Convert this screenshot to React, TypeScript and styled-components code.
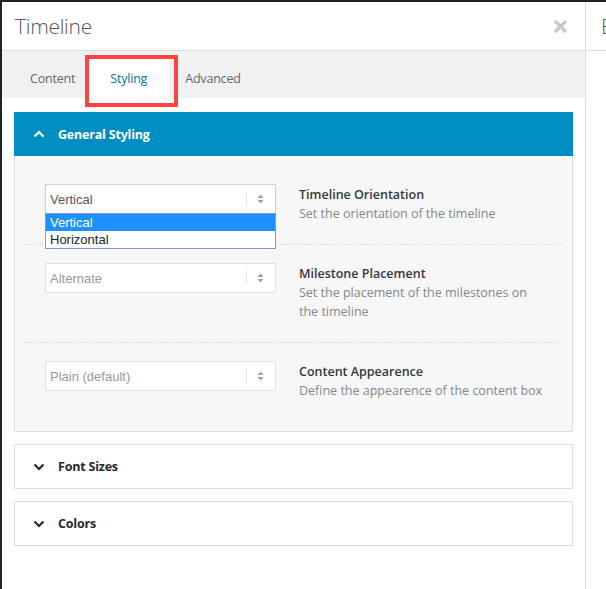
import React from "react"
import styled, { createGlobalStyle } from "styled-components"

const GlobalStyle = createGlobalStyle`
  html, body {
    margin: 0;
    padding: 0;
    background: #1d2226;
    font-family: "Open Sans", "Noto Sans", sans-serif;
  }
`

interface Field {
  value: string
  title: string
  description: string
  active?: boolean
  options?: string[]
}

const fields: Field[] = [
  {
    value: "Vertical",
    title: "Timeline Orientation",
    description: "Set the orientation of the timeline",
    active: true,
    options: ["Vertical", "Horizontal"],
  },
  {
    value: "Alternate",
    title: "Milestone Placement",
    description: "Set the placement of the milestones on the timeline",
  },
  {
    value: "Plain (default)",
    title: "Content Appearence",
    description: "Define the appearence of the content box",
  },
]

const Chevron = ({ up }: { up?: boolean }) => (
  <svg width="12" height="8" viewBox="0 0 12 8">
    <path d={up ? "M1.5 6.5 L6 2 L10.5 6.5" : "M1.5 1.5 L6 6 L10.5 1.5"} fill="none" stroke="currentColor" strokeWidth="2.2" />
  </svg>
)

const CloseIcon = () => (
  <svg width="13" height="13" viewBox="0 0 13 13">
    <path d="M2 2 L11 11 M11 2 L2 11" stroke="#c8c8c8" strokeWidth="3.4" strokeLinecap="round" />
  </svg>
)

const SortArrows = () => (
  <svg width="7" height="10" viewBox="0 0 7 10">
    <path d="M3.5 0.5 L6.5 4 H0.5 Z M3.5 9.5 L6.5 6 H0.5 Z" fill="#a0a0a0" />
  </svg>
)

export default function App() {
  return (
    <>
      <GlobalStyle />
      <S.Screen>
        <S.Modal>
          <S.Header>
            <S.Title>Timeline</S.Title>
            <S.Close>
              <CloseIcon />
            </S.Close>
          </S.Header>
          <S.Tabs>
            <S.Tab>Content</S.Tab>
            <S.Tab active>
              Styling
              <S.Highlight />
            </S.Tab>
            <S.Tab>Advanced</S.Tab>
          </S.Tabs>
          <S.Sections>
            <S.Section>
              <S.SectionHeader open>
                <Chevron up />
                <span>General Styling</span>
              </S.SectionHeader>
              <S.SectionBody>
                {fields.map((field) => (
                  <S.Row key={field.title}>
                    <S.SelectWrap>
                      <S.Select active={field.active}>
                        <span>{field.value}</span>
                        <S.SelectArrow>
                          <SortArrows />
                        </S.SelectArrow>
                      </S.Select>
                      {field.options && (
                        <S.OptionList>
                          {field.options.map((option) => (
                            <S.Option key={option} selected={option === field.value}>
                              {option}
                            </S.Option>
                          ))}
                        </S.OptionList>
                      )}
                    </S.SelectWrap>
                    <S.Label>
                      <strong>{field.title}</strong>
                      <span>{field.description}</span>
                    </S.Label>
                  </S.Row>
                ))}
              </S.SectionBody>
            </S.Section>
            <S.Section>
              <S.SectionHeader>
                <Chevron />
                <span>Font Sizes</span>
              </S.SectionHeader>
            </S.Section>
            <S.Section>
              <S.SectionHeader>
                <Chevron />
                <span>Colors</span>
              </S.SectionHeader>
            </S.Section>
          </S.Sections>
        </S.Modal>
        <S.NextPanel>
          <S.NextHeader>
            <S.Title>E</S.Title>
          </S.NextHeader>
        </S.NextPanel>
      </S.Screen>
    </>
  )
}

const S = {
  Screen: styled.div`
    display: flex;
    height: 589px;
    padding: 2px 0 0 2px;
    box-sizing: border-box;
    overflow: hidden;
  `,

  Modal: styled.div`
    width: 583px;
    flex-shrink: 0;
    background: #fff;
    border-right: 1px solid #dddddd;
    display: flex;
    flex-direction: column;
  `,

  Header: styled.div`
    height: 48px;
    border-bottom: 1px solid #dddddd;
    display: flex;
    align-items: center;
    justify-content: space-between;
    padding: 0 18px 0 13px;
  `,

  Title: styled.h1`
    margin: 0;
    font-size: 21px;
    font-weight: 300;
    color: #555;
    letter-spacing: -0.3px;
  `,

  Close: styled.span`
    display: flex;
    align-items: center;
  `,

  Tabs: styled.div`
    height: 47px;
    background: #f1f1f1;
    display: flex;
    align-items: flex-end;
    padding-left: 12px;
  `,

  Tab: styled.div<{ active?: boolean }>`
    position: relative;
    height: 39px;
    display: flex;
    align-items: center;
    padding: ${(p) => (p.active ? "0 22px 0 21px" : "0 14px 0 16px")};
    font-size: 12.5px;
    letter-spacing: -0.2px;
    color: ${(p) => (p.active ? "#0073aa" : "#666")};
    background: ${(p) => (p.active ? "#fff" : "transparent")};
  `,

  Highlight: styled.span`
    position: absolute;
    top: -4px;
    left: -4px;
    right: -9px;
    bottom: -9px;
    border: 4px solid #ff4343;
    pointer-events: none;
  `,

  Sections: styled.div`
    display: flex;
    flex-direction: column;
    gap: 12px;
    padding: 14px 12px 0;
  `,

  Section: styled.div`
    border: 1px solid #dddddd;
    background: #fff;
  `,

  SectionHeader: styled.div<{ open?: boolean }>`
    height: ${(p) => (p.open ? "44px" : "43px")};
    margin: ${(p) => (p.open ? "-1px -1px 0" : "0")};
    display: flex;
    align-items: center;
    gap: 13px;
    padding-left: ${(p) => (p.open ? "19px" : "18px")};
    background: ${(p) => (p.open ? "#008ec2" : "#fff")};
    color: ${(p) => (p.open ? "#fff" : "#23282d")};
    font-size: 12.5px;
    font-weight: 700;
    letter-spacing: -0.2px;
  `,

  SectionBody: styled.div`
    background: #f7f7f7;
    padding: 10px 10px 10px;
  `,

  Row: styled.div`
    display: flex;
    align-items: flex-start;
    gap: 23px;
    padding: 18px 18px 21px 20px;
    border-bottom: 1px dashed #dcdcdc;

    &:last-child {
      border-bottom: none;
    }
  `,

  SelectWrap: styled.div`
    position: relative;
    width: 231px;
    flex-shrink: 0;
  `,

  Select: styled.div<{ active?: boolean }>`
    height: 30px;
    box-sizing: border-box;
    display: flex;
    align-items: center;
    justify-content: space-between;
    padding-left: 4px;
    background: #fff;
    border: 1px solid ${(p) => (p.active ? "#cfcfcf" : "#e0e0e0")};
    box-shadow: ${(p) => (p.active ? "0 1px 2px rgba(0, 0, 0, 0.08)" : "none")};
    font-family: "Liberation Sans", Arial, sans-serif;
    font-size: 13px;
    color: ${(p) => (p.active ? "#555" : "#999")};
  `,

  SelectArrow: styled.span`
    display: flex;
    align-items: center;
    height: 14px;
    padding: 0 11px 0 10px;
    border-left: 1px solid #e2e2e2;
  `,

  OptionList: styled.div`
    position: absolute;
    top: 29px;
    left: 0;
    right: 0;
    background: #fff;
    border: 1px solid #7a9ad8;
    z-index: 2;
  `,

  Option: styled.div<{ selected?: boolean }>`
    height: 17px;
    line-height: 17px;
    padding-left: 4px;
    font-family: "Liberation Sans", Arial, sans-serif;
    font-size: 13px;
    color: ${(p) => (p.selected ? "#fff" : "#222")};
    background: ${(p) => (p.selected ? "#1e90ff" : "#fff")};
  `,

  Label: styled.div`
    flex: 1;
    display: flex;
    flex-direction: column;
    padding-top: 1px;
    font-size: 12.5px;
    line-height: 19px;

    strong {
      font-weight: 600;
      color: #32373c;
    }

    span {
      color: #82878c;
    }
  `,

  NextPanel: styled.div`
    flex: 1;
    background: #fff;
  `,

  NextHeader: styled.div`
    height: 48px;
    border-bottom: 1px solid #dddddd;
    display: flex;
    align-items: center;
    padding-left: 15px;
  `,
}
